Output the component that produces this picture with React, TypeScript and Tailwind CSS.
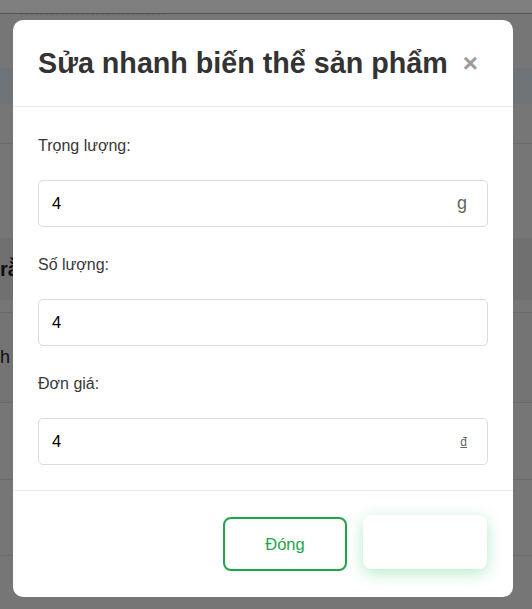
const Field = ({ label, value, suffix, first }: { label: string; value: string; suffix?: React.ReactNode; first?: boolean }) => (
  <div className={first ? "" : "mt-6"}>
    <label className="block text-[16px] leading-[24px] text-[#383838] pt-[2px]">{label}</label>
    <div className="mt-[22px] h-[47px] border border-[#dcdcdc] rounded-[5px] flex items-center pl-[13px] pr-[20px]">
      <span className="flex-1 text-[16.5px] text-black">{value}</span>
      {suffix}
    </div>
  </div>
);

const App = () => {
  return (
    <div
      className="relative w-[532px] h-[609px] overflow-hidden bg-white"
      style={{ fontFamily: '"Liberation Sans", Arial, sans-serif' }}
    >
      {/* PAGE BEHIND */}
      <div className="h-[14px] bg-white border-b border-[#aaa]" />
      <div className="h-[595px] bg-[#ececec]">
        <div className="h-[2px] mx-[20px] w-[145px] border-t border-dashed border-[#d4d4d4]" />
        <div className="h-[52px]" />
        <div className="h-[36px] bg-[#dce6f0]" />
        <div className="h-[40px] border-b border-[#d6d6d6]" />
        <div className="h-[94px]" />
        <div className="h-[62px] bg-[#e0e0e0] flex items-center text-[20px] font-bold text-[#222]">rằng</div>
        <div className="h-[13px] border-b border-[#d6d6d6]" />
        <div className="h-[90px] flex items-center text-[18px] text-[#222] border-b border-[#d6d6d6] bg-[#e8e8e8]">h</div>
        <div className="h-[77px] flex items-center pl-[22px] text-[18px] text-[#333] border-b border-[#d6d6d6]">4</div>
        <div className="h-[76px] flex items-center pl-[22px] text-[18px] text-[#333] border-b border-[#d6d6d6]">4</div>
      </div>

      {/* OVERLAY + MODAL */}
      <div className="absolute inset-0 bg-black/50 pt-[20px] pl-[13px]">
        <div className="w-[500px] bg-white rounded-[10px]">
          <div className="flex items-center px-[25px] pt-[25px] pb-[24px] border-b border-[#eaeaea]">
            <h2 className="text-[28.7px] leading-[37px] font-bold text-[#333]">Sửa nhanh biến thể sản phẩm</h2>
            <button className="ml-[15px] text-[26px] leading-none font-bold text-[#9a9a9a] -mt-[2px]">×</button>
          </div>
          <div className="px-[25px] pt-[25px] pb-[25px] border-b border-[#eaeaea]">
            <Field first label="Trọng lượng:" value="4" suffix={<span className="text-[18px] text-[#666]">g</span>} />
            <Field label="Số lượng:" value="4" />
            <Field label="Đơn giá:" value="4" suffix={<span className="text-[12px] text-[#666] underline">đ</span>} />
          </div>
          <div className="flex justify-end gap-4 px-[26px] pt-[26px] pb-[26px]">
            <button className="w-[124px] h-[54px] rounded-[8px] border-2 border-[#1ea44c] text-[#1ea44c] text-[16.5px]">Đóng</button>
            <button className="w-[124px] h-[54px] rounded-[8px] bg-white text-white -translate-y-[2px] shadow-[0_4px_16px_rgba(34,197,94,0.35)]">Lưu</button>
          </div>
        </div>
      </div>
    </div>
  );
};

export default App;
